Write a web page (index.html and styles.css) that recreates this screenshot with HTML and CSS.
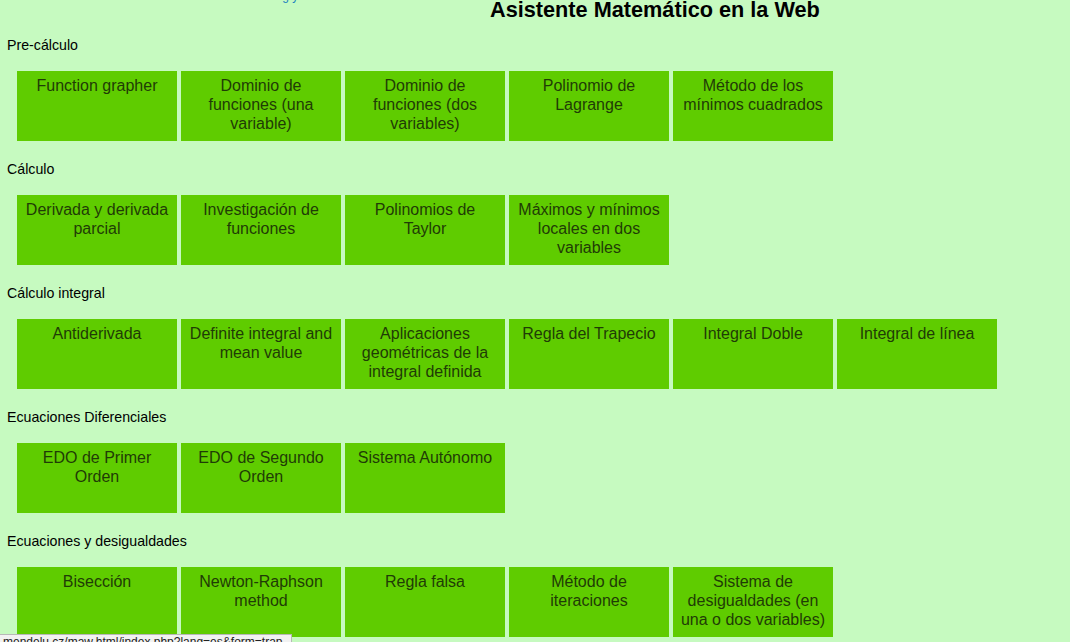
FILE: index.html
```html
<!DOCTYPE html>
<html lang="es">
<head>
<meta charset="utf-8">
<title>Asistente Matemático en la Web</title>
<link rel="stylesheet" href="styles.css">
</head>
<body>
<header class="top">
  <div class="lang"><a href="#">Translating y</a></div>
  <h1 class="title">Asistente Matemático en la Web</h1>
</header>

<section class="section">
  <p class="heading">Pre-cálculo</p>
  <div class="row">
    <a class="tile" href="#">Function grapher</a>
    <a class="tile" href="#">Dominio de funciones (una variable)</a>
    <a class="tile" href="#">Dominio de funciones (dos variables)</a>
    <a class="tile" href="#">Polinomio de Lagrange</a>
    <a class="tile" href="#">Método de los mínimos cuadrados</a>
  </div>
</section>

<section class="section">
  <p class="heading">Cálculo</p>
  <div class="row">
    <a class="tile" href="#">Derivada y derivada parcial</a>
    <a class="tile" href="#">Investigación de funciones</a>
    <a class="tile" href="#">Polinomios de Taylor</a>
    <a class="tile" href="#">Máximos y mínimos locales en dos variables</a>
  </div>
</section>

<section class="section">
  <p class="heading">Cálculo integral</p>
  <div class="row">
    <a class="tile" href="#">Antiderivada</a>
    <a class="tile" href="#">Definite integral and mean value</a>
    <a class="tile" href="#">Aplicaciones geométricas de la integral definida</a>
    <a class="tile" href="#">Regla del Trapecio</a>
    <a class="tile" href="#">Integral Doble</a>
    <a class="tile" href="#">Integral de línea</a>
  </div>
</section>

<section class="section">
  <p class="heading">Ecuaciones Diferenciales</p>
  <div class="row">
    <a class="tile" href="#">EDO de Primer Orden</a>
    <a class="tile" href="#">EDO de Segundo Orden</a>
    <a class="tile" href="#">Sistema Autónomo</a>
  </div>
</section>

<section class="section">
  <p class="heading">Ecuaciones y desigualdades</p>
  <div class="row">
    <a class="tile" href="#">Bisección</a>
    <a class="tile" href="#">Newton-Raphson method</a>
    <a class="tile" href="#">Regla falsa</a>
    <a class="tile" href="#">Método de iteraciones</a>
    <a class="tile" href="#">Sistema de desigualdades (en una o dos variables)</a>
  </div>
</section>

<div class="statusbar">mendelu.cz/maw.html/index.php?lang=es&amp;form=trap</div>
</body>
</html>
```

FILE: styles.css
```css
html, body {
  margin: 0;
  padding: 0;
  background: #c6fac0;
  font-family: "Liberation Sans", Arial, sans-serif;
  color: #000;
}

.top {
  display: flex;
  align-items: flex-start;
  height: 20px;
}

.lang {
  width: 490px;
  height: 20px;
  overflow: hidden;
  font-size: 12px;
  line-height: 14px;
}

.lang a {
  display: block;
  margin-top: -11px;
  padding-left: 230px;
  color: #1a7fc0;
  text-decoration: none;
}

.title {
  margin: 0;
  font-size: 21.7px;
  line-height: 20px;
  font-weight: bold;
  color: #000;
  white-space: nowrap;
}

.section {
  padding-left: 6px;
}

.section:first-of-type {
  padding-top: 17px;
}

.heading {
  margin: 0;
  font-size: 14.2px;
  line-height: 16px;
  padding-left: 1px;
}

.row {
  display: flex;
  gap: 4px;
  margin: 18px 0 20px 11px;
}

.tile {
  box-sizing: border-box;
  width: 160px;
  height: 70px;
  padding: 5px 7px 0;
  background: #5fcc00;
  color: #1f3c06;
  text-decoration: none;
  text-align: center;
  font-size: 16px;
  line-height: 19px;
}

.statusbar {
  position: fixed;
  left: 0;
  bottom: -11px;
  box-sizing: border-box;
  width: 292px;
  height: 19px;
  padding: 0 3px;
  background: #f2f2f2;
  border: 1px solid #b8b8b8;
  border-left: none;
  font-size: 12px;
  line-height: 14px;
  color: #222;
  white-space: nowrap;
  overflow: hidden;
}
```
